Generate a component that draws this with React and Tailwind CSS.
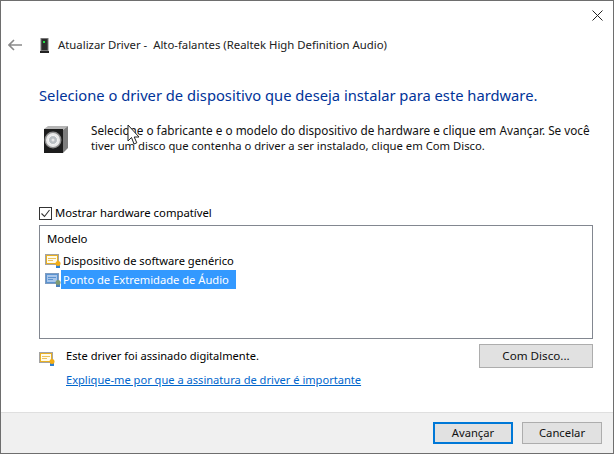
const font = { fontFamily: '"Noto Sans", sans-serif' };

const CertIcon = ({ tint = "gold", className = "" }) => {
  const blue = tint === "blue";
  return (
    <svg width="16" height="15" viewBox="0 0 16 15" className={`shrink-0 ${className}`}>
      <rect x="0.5" y="1.5" width="13" height="10" fill="none" stroke={blue ? "#7f9cc0" : "#a3a3a3"} />
      <rect x="1.5" y="2.5" width="11" height="8" fill={blue ? "#a9c6ea" : "#fffbea"} stroke={blue ? "#5b93d0" : "#e8b024"} />
      <path d="M3 5.5h8M3 7.5h5" stroke={blue ? "#5b93d0" : "#ecc25a"} strokeWidth="1" />
      <path d="M11 12h4v3h-4z" fill={blue ? "#4a7fb8" : "#2f7fd0"} />
      <circle cx="13" cy="10.5" r="2.5" fill={blue ? "#7f9a72" : "#f2ac14"} />
    </svg>
  );
};

const SpeakerIcon = () => (
  <svg width="25" height="30" viewBox="0 0 25 30" className="shrink-0">
    <path d="M1 4l4-3h20l-5 4H1z" fill="#b5b5b5" />
    <path d="M20 5l5-4v22l-5 5z" fill="#7d7d7d" />
    <rect x="1" y="4" width="19" height="24" fill="#1c1c1c" />
    <circle cx="10" cy="15" r="8.5" fill="#8d8d8d" />
    <circle cx="10" cy="15" r="7" fill="#e9e9e9" />
    <circle cx="10" cy="15" r="4.5" fill="#b9bec2" stroke="#f7f7f7" />
    <circle cx="10" cy="15" r="1.5" fill="#e6e6e6" />
  </svg>
);

const Pointer = () => (
  <svg width="13" height="22" viewBox="0 0 13 22" className="absolute left-[126px] top-[123px]">
    <path d="M1 1v16l3.5-3.5L7 20l2.8-1.2L7.2 13h4.8z" fill="#fff" stroke="#222" strokeWidth="1" />
  </svg>
);

const WinButton = ({ children, className }) => (
  <button className={`text-[#111] bg-[#e1e1e1] ${className}`}>{children}</button>
);

export default function App() {
  return (
    <div style={font} className="relative w-[614px] h-[454px] flex flex-col bg-white border border-[#6e6e6e] text-[12px] leading-[16px] text-black overflow-hidden">
      <div className="h-[29px] flex justify-end shrink-0">
        <svg width="11" height="11" viewBox="0 0 11 11" className="mt-[9px] mr-[10px]">
          <path d="M0.5 0.5l10 10M10.5 0.5l-10 10" stroke="#222" strokeWidth="1" />
        </svg>
      </div>

      <div className="flex items-center h-[30px] pl-[7px] shrink-0">
        <svg width="14" height="12" viewBox="0 0 14 12">
          <path d="M6 1L1 6l5 5M1 6h13" fill="none" stroke="#8a8a8a" strokeWidth="1.6" />
        </svg>
        <svg width="10" height="15" viewBox="0 0 10 15" className="ml-[18px]">
          <rect x="1" y="0.5" width="7" height="12" fill="#2c2c2c" stroke="#777" />
          <rect x="3" y="3" width="2" height="2" fill="#22dd44" />
          <rect x="0" y="13" width="9" height="2" fill="#222" />
        </svg>
        <span className="ml-[8px] text-[#222] text-[11.35px] whitespace-nowrap">Atualizar Driver -&nbsp; Alto-falantes (Realtek High Definition Audio)</span>
      </div>

      <h1 className="mt-[24px] pl-[38px] text-[14.73px] leading-[22px] text-[#003399] font-normal whitespace-nowrap">
        Selecione o driver de dispositivo que deseja instalar para este hardware.
      </h1>

      <div className="flex mt-[19px] pl-[42px] h-[29px]">
        <SpeakerIcon />
        <p className="ml-[23px] mt-[-2px] leading-[15px] text-[#111] whitespace-nowrap">
          <span className="block text-[11.76px]">Selecione o fabricante e o modelo do dispositivo de hardware e clique em Avançar. Se você</span>
          <span className="block text-[11.28px]">tiver um disco que contenha o driver a ser instalado, clique em Com Disco.</span>
        </p>
      </div>

      <label className="flex items-center mt-[51px] pl-[38px] h-[16px]">
        <span className="w-[13px] h-[13px] border border-[#333] flex items-center justify-center">
          <svg width="11" height="11" viewBox="0 0 11 11">
            <path d="M1.5 5.5l3 3 5-6.5" fill="none" stroke="#333" strokeWidth="1.1" />
          </svg>
        </span>
        <span className="ml-[3px] text-[11.3px] whitespace-nowrap">Mostrar hardware compatível</span>
      </label>

      <div className="mt-[4px] ml-[38px] mr-[20px] h-[114px] border border-[#828790] pt-[5px] shrink-0 text-[11.15px] whitespace-nowrap">
        <div className="pl-[7px] h-[16px] text-[11.4px]">Modelo</div>
        <div className="mt-[4px] flex items-center h-[19px] pl-[5px]">
          <CertIcon />
          <span className="pl-[2px]">Dispositivo de software genérico</span>
        </div>
        <div className="flex items-center h-[19px] pl-[5px]">
          <CertIcon tint="blue" />
          <span className="h-[19px] leading-[19px] w-[175px] pl-[2px] bg-[#3399ff] text-white">Ponto de Extremidade de Áudio</span>
        </div>
      </div>

      <div className="flex mt-[5px] pl-[38px] pr-[20px]">
        <div className="flex-1 pt-[3px] text-[11.1px] whitespace-nowrap">
          <div className="flex items-center h-[17px]">
            <CertIcon className="mt-[6px]" />
            <span className="ml-[11px]">Este driver foi assinado digitalmente.</span>
          </div>
          <a className="block mt-[8px] ml-[27px] underline text-[#0066cc]">Explique-me por que a assinatura de driver é importante</a>
        </div>
        <WinButton className="w-[114px] h-[24px] border border-[#adadad] text-[11.65px]">Com Disco...</WinButton>
      </div>

      <div className="mt-auto h-[41px] flex items-center justify-end gap-[9px] pr-[11px] bg-[#f0f0f0] border-t border-[#dfdfdf]">
        <WinButton className="w-[80px] h-[22px] border-2 border-[#0078d7] text-[11.2px]">Avançar</WinButton>
        <WinButton className="w-[80px] h-[22px] border border-[#adadad] text-[11.3px]">Cancelar</WinButton>
      </div>

      <Pointer />
    </div>
  );
}
